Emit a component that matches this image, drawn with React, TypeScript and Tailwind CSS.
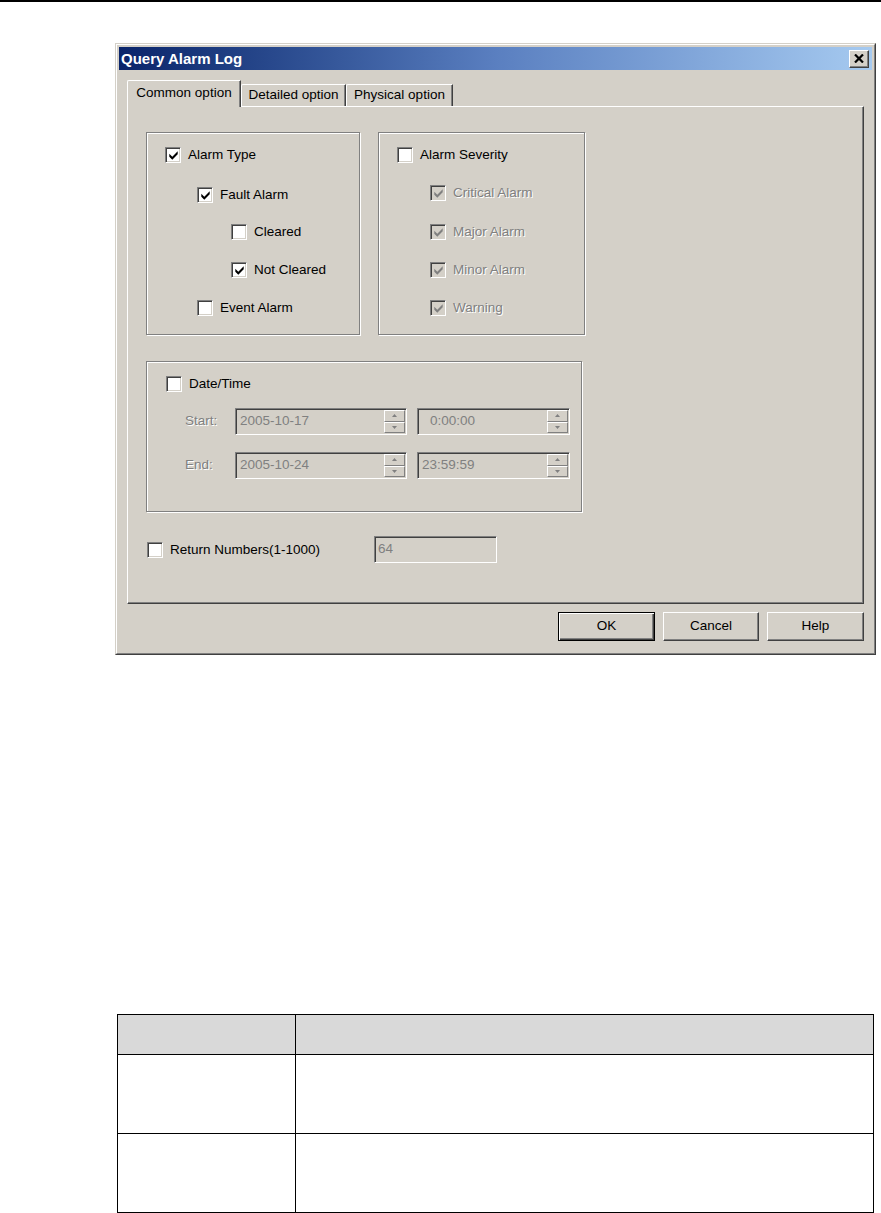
import React from 'react';

const FACE = 'bg-[#d4d0c8]';

function CheckBox({ checked, disabled }: { checked?: boolean; disabled?: boolean }) {
  return (
    <span
      className={`flex h-[16px] w-[16px] shrink-0 items-center justify-center border-t border-l border-b border-r border-t-[#808080] border-l-[#808080] border-b-white border-r-white shadow-[inset_1px_1px_0_#404040,inset_-1px_-1px_0_#d4d0c8] ${
        disabled ? 'bg-[#d4d0c8]' : 'bg-white'
      }`}
    >
      {checked && (
        <svg width="9" height="9" viewBox="0 0 7 7.5">
          <polygon
            points="0,2.2 2.5,4.7 7,0.2 7,2.8 2.5,7.3 0,4.8"
            fill={disabled ? '#808080' : '#000'}
          />
        </svg>
      )}
    </span>
  );
}

function Option({
  label,
  checked,
  disabled,
  className = '',
}: {
  label: string;
  checked?: boolean;
  disabled?: boolean;
  className?: string;
}) {
  return (
    <div className={`flex h-[16px] items-center gap-[7px] ${className}`}>
      <CheckBox checked={checked} disabled={disabled} />
      <span
        className={`whitespace-nowrap leading-none ${
          disabled ? 'text-[#808080] [text-shadow:1px_1px_0_#fff]' : 'text-black'
        }`}
      >
        {label}
      </span>
    </div>
  );
}

function Arrow({ up }: { up?: boolean }) {
  return (
    <svg width="5" height="3" viewBox="0 0 5 3">
      <polygon points={up ? '2.5,0 5,3 0,3' : '0,0 5,0 2.5,3'} fill="#808080" />
    </svg>
  );
}

function Spinner() {
  return (
    <div className="flex h-full w-[21px] shrink-0 flex-col">
      {[true, false].map((up) => (
        <div
          key={String(up)}
          className="flex flex-1 items-center justify-center border-t border-l border-b border-r border-t-white border-l-white border-b-[#808080] border-r-[#808080] bg-[#d4d0c8]"
        >
          <Arrow up={up} />
        </div>
      ))}
    </div>
  );
}

function Field({
  width,
  value,
  pad,
  spin = true,
}: {
  width: string;
  value: string;
  pad: string;
  spin?: boolean;
}) {
  return (
    <div
      className={`${width} flex h-[27px] items-stretch border-t border-l border-b border-r border-t-[#808080] border-l-[#808080] border-b-white border-r-white bg-[#d4d0c8] p-[1px] shadow-[inset_1px_1px_0_#404040,inset_-1px_-1px_0_#d4d0c8]`}
    >
      <span className={`flex flex-1 items-center text-[#808080] ${pad}`}>{value}</span>
      {spin && <Spinner />}
    </div>
  );
}

function Button({ label, isDefault, width }: { label: string; isDefault?: boolean; width: string }) {
  return (
    <button
      className={`${width} h-[29px] ${FACE} flex items-center justify-center ${
        isDefault
          ? 'border border-black shadow-[inset_1px_1px_0_#fff,inset_-1px_-1px_0_#404040,inset_-2px_-2px_0_#808080]'
          : 'border-t border-l border-b border-r border-t-white border-l-white border-b-[#404040] border-r-[#404040] shadow-[inset_-1px_-1px_0_#808080]'
      }`}
    >
      {label}
    </button>
  );
}

const group = 'border border-[#808080] shadow-[inset_1px_1px_0_#fff,1px_1px_0_#fff]';

function CommonOption() {
  return (
    <div className="h-[498px] border-t border-l border-b border-r border-t-white border-l-white border-b-[#404040] border-r-[#404040] pt-[25px] pl-[18px] shadow-[inset_-1px_-1px_0_#808080]">
      <div className="flex gap-[18px]">
        <div className={`${group} h-[203px] w-[214px] pt-[14px] pl-[18px]`}>
          <Option label="Alarm Type" checked />
          <Option label="Fault Alarm" checked className="mt-[24px] ml-[32px]" />
          <Option label="Cleared" className="mt-[21px] ml-[66px]" />
          <Option label="Not Cleared" checked className="mt-[22px] ml-[66px]" />
          <Option label="Event Alarm" className="mt-[22px] ml-[32px]" />
        </div>
        <div className={`${group} h-[203px] w-[207px] pt-[14px] pl-[18px]`}>
          <Option label="Alarm Severity" />
          <Option label="Critical Alarm" checked disabled className="mt-[22px] ml-[33px]" />
          <Option label="Major Alarm" checked disabled className="mt-[23px] ml-[33px]" />
          <Option label="Minor Alarm" checked disabled className="mt-[22px] ml-[33px]" />
          <Option label="Warning" checked disabled className="mt-[22px] ml-[33px]" />
        </div>
      </div>

      <div className={`${group} mt-[26px] h-[151px] w-[436px] pt-[14px] pl-[19px]`}>
        <Option label="Date/Time" />
        <div className="mt-[16px] flex items-center pl-[19px]">
          <span className="w-[50px] text-[#808080] [text-shadow:1px_1px_0_#fff]">Start:</span>
          <Field width="w-[172px]" value="2005-10-17" pad="pl-[3px]" />
          <div className="w-[10px]" />
          <Field width="w-[153px]" value="0:00:00" pad="pl-[11px]" />
        </div>
        <div className="mt-[17px] flex items-center pl-[19px]">
          <span className="w-[50px] text-[#808080] [text-shadow:1px_1px_0_#fff]">End:</span>
          <Field width="w-[172px]" value="2005-10-24" pad="pl-[3px]" />
          <div className="w-[10px]" />
          <Field width="w-[153px]" value="23:59:59" pad="pl-[3px]" />
        </div>
      </div>

      <div className="mt-[24px] flex items-center pl-[1px]">
        <div className="w-[227px]">
          <Option label="Return Numbers(1-1000)" />
        </div>
        <Field width="w-[123px]" value="64" pad="pl-[2px]" spin={false} />
      </div>
    </div>
  );
}

function Dialog() {
  return (
    <div className="mt-[41px] ml-[115px] w-[761px] border-t border-l border-b border-r border-t-[#d4d0c8] border-l-[#d4d0c8] border-b-[#404040] border-r-[#404040]">
      <div className="border-t border-l border-b border-r border-t-white border-l-white border-b-[#808080] border-r-[#808080] bg-[#d4d0c8] p-[2px]">
        {/* title bar */}
        <div className="flex h-[23px] items-center justify-between bg-linear-to-r from-[#0a246a] via-[#5a7fc0] to-[#a6caf0] pl-[2px] pr-[3px]">
          <span className="text-[15px] font-bold leading-none text-white">Query Alarm Log</span>
          <button className="flex h-[18px] w-[20px] items-center justify-center border-t border-l border-b border-r border-t-white border-l-white border-b-[#404040] border-r-[#404040] bg-[#d4d0c8] shadow-[inset_-1px_-1px_0_#808080]">
            <svg width="10" height="9" viewBox="0 0 10 9">
              <path d="M1 0.5 L9 8.5 M9 0.5 L1 8.5" stroke="#000" strokeWidth="2.2" />
            </svg>
          </button>
        </div>

        <div className="px-[8px] pt-[10px] pb-[10px]">
          {/* tabs */}
          <div className="flex h-[26px] items-end">
            <div className="relative z-10 -mb-[1px] flex h-[27px] w-[114px] items-center justify-center rounded-tl-[2px] border-t border-l border-r border-t-white border-l-white border-r-[#404040] bg-[#d4d0c8] pb-[1px] shadow-[inset_-1px_0_0_#808080]">
              Common option
            </div>
            <div className="flex h-[22px] w-[105px] items-center justify-center rounded-tl-[2px] border-t border-l border-r border-t-white border-l-white border-r-[#404040] shadow-[inset_-1px_0_0_#808080]">
              Detailed option
            </div>
            <div className="flex h-[22px] w-[107px] items-center justify-center rounded-tl-[2px] border-t border-l border-r border-t-white border-l-white border-r-[#404040] shadow-[inset_-1px_0_0_#808080]">
              Physical option
            </div>
          </div>

          <CommonOption />

          <div className="mt-[8px] flex justify-end gap-[8px]">
            <Button label="OK" isDefault width="w-[97px]" />
            <Button label="Cancel" width="w-[96px]" />
            <Button label="Help" width="w-[97px]" />
          </div>
        </div>
      </div>
    </div>
  );
}

function Table() {
  return (
    <div className="mt-[359px] ml-[117px] grid w-[757px] grid-cols-[178px_1fr] border border-black">
      <div className="h-[40px] border-r border-b border-black bg-[#d9d9d9]" />
      <div className="h-[40px] border-b border-black bg-[#d9d9d9]" />
      <div className="h-[79px] border-r border-b border-black" />
      <div className="h-[79px] border-b border-black" />
      <div className="h-[78px] border-r border-black" />
      <div className="h-[78px]" />
    </div>
  );
}

export default function App() {
  return (
    <div className="h-[1213px] w-[881px] overflow-hidden bg-white font-['Liberation_Sans',Arial,sans-serif] text-[13.5px] text-black">
      <div className="h-[2px] bg-black" />
      <Dialog />
      <Table />
    </div>
  );
}
